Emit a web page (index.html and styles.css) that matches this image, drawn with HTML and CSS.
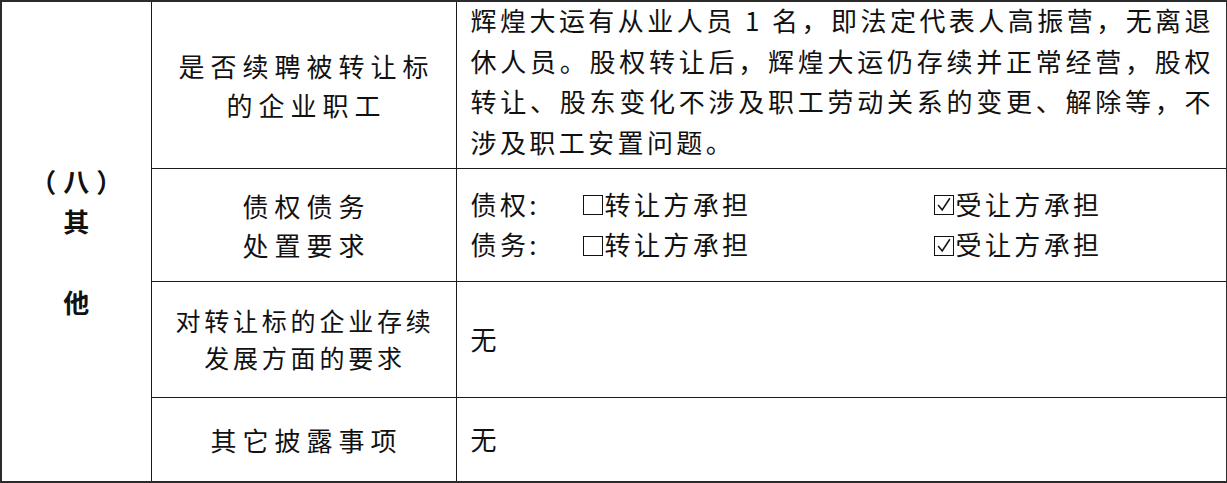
FILE: index.html
```html
<!DOCTYPE html>
<html lang="zh-CN">
<head>
<meta charset="utf-8">
<title>其他</title>
<link rel="stylesheet" href="styles.css">
</head>
<body>
<table class="grid">
  <colgroup><col class="c1"><col class="c2"><col class="c3"></colgroup>
  <tr class="r1">
    <td rowspan="4" class="sec"><span class="num">（八）</span><br>其<br><br>他</td>
    <td class="label">是否续聘被转让标<br>的企业职工</td>
    <td class="body">辉煌大运有从业人员 1 名，即法定代表人高振营，无离退休人员。股权转让后，辉煌大运仍存续并正常经营，股权转让、股东变化不涉及职工劳动关系的变更、解除等，不涉及职工安置问题。</td>
  </tr>
  <tr class="r2">
    <td class="label">债权债务<br>处置要求</td>
    <td class="body opts">
      <div class="opt-row"><span class="opt-name">债权:</span><span class="opt"><span class="box"></span>转让方承担</span><span class="opt"><span class="box checked"><svg viewBox="0 0 20 20"><path d="M3.5 10 L8 15.5 L16.5 2.5" fill="none" stroke="#111" stroke-width="1.7"/></svg></span>受让方承担</span></div>
      <div class="opt-row"><span class="opt-name">债务:</span><span class="opt"><span class="box"></span>转让方承担</span><span class="opt"><span class="box checked"><svg viewBox="0 0 20 20"><path d="M3.5 10 L8 15.5 L16.5 2.5" fill="none" stroke="#111" stroke-width="1.7"/></svg></span>受让方承担</span></div>
    </td>
  </tr>
  <tr class="r3">
    <td class="label small">对转让标的企业存续<br>发展方面的要求</td>
    <td class="body mid">无</td>
  </tr>
  <tr class="r4">
    <td class="label">其它披露事项</td>
    <td class="body mid">无</td>
  </tr>
</table>
</body>
</html>
```
FILE: styles.css
```css
html, body {
  margin: 0;
  padding: 0;
  background: #fff;
}
body {
  font-family: "Noto Sans CJK SC", "Noto Sans", sans-serif;
  color: #111;
}
.grid {
  border-collapse: collapse;
  table-layout: fixed;
  width: 1226px;
  margin: 0;
  border: 2px solid #2b2b2b;
}
.c1 { width: 150px; }
.c2 { width: 305px; }
.c3 { width: 771px; }
.grid td {
  border: 1px solid #1a1a1a;
  padding: 0;
}
.r1 { height: 167px; }
.r2 { height: 113px; }
.r3 { height: 116px; }
.r4 { height: 85px; }
.sec {
  text-align: center;
  vertical-align: middle;
  font-weight: 700;
  font-size: 26px;
  line-height: 40.5px;
}
.num {
  letter-spacing: 7px;
  padding-left: 7px;
}
.label {
  text-align: center;
  vertical-align: middle;
  font-size: 26px;
  letter-spacing: 6px;
  line-height: 39px;
  padding-left: 6px !important;
}
.label.small {
  font-size: 25px;
  letter-spacing: 3.8px;
  line-height: 37px;
  padding-left: 3px !important;
}
.body {
  vertical-align: top;
  font-size: 26px;
  letter-spacing: 3.4px;
  line-height: 40.7px;
  text-align: justify;
  padding: 0 12px 0 14px !important;
}
.r1 .body {
  position: relative;
  top: -2px;
}
.body.mid {
  vertical-align: middle;
}
.opts {
  vertical-align: middle;
}
.opt-row {
  display: flex;
  align-items: center;
  height: 40.5px;
}
.opt-name {
  width: 112px;
  flex: none;
}
.opt {
  display: flex;
  align-items: center;
  width: 351px;
  flex: none;
}
.box {
  display: inline-block;
  width: 18px;
  height: 18px;
  border: 1.5px solid #111;
  margin-right: 2px;
  flex: none;
  position: relative;
  top: 1px;
}
.box svg {
  display: block;
  width: 18px;
  height: 18px;
}
```
